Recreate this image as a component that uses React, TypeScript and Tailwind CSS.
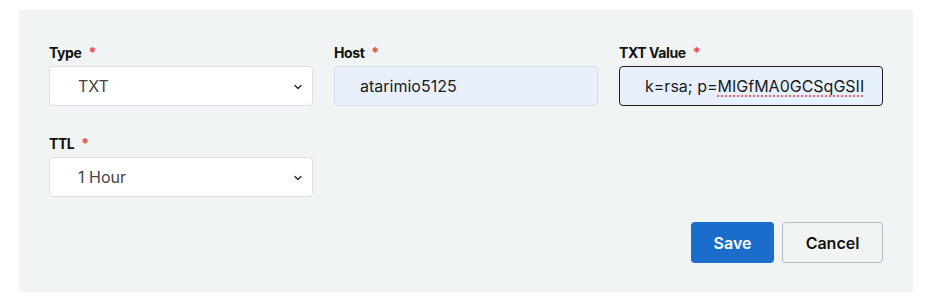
import { ChevronDown } from "lucide-react";

const font = { fontFamily: "Inter, 'Liberation Sans', sans-serif" };

function Label({ text }: { text: string }) {
  return (
    <div className="flex items-center h-5 mb-[4px] text-[14px] font-bold tracking-[-0.03em] text-[#111]">
      {text}
      <span className="ml-[7px] text-[#e5484d]">*</span>
    </div>
  );
}

function FakeSelect({ value }: { value: string }) {
  return (
    <div className="relative flex items-center h-[40px] rounded-[4px] border border-[#dcdfe3] bg-white pl-[28px] text-[16px] text-[#444]">
      {value}
      <ChevronDown className="absolute right-[8px] top-[14px] h-[12px] w-[12px] text-[#333]" strokeWidth={3} />
    </div>
  );
}

export default function App() {
  return (
    <div className="bg-white w-[932px] h-[300px] pt-[10px] pl-[19px]" style={font}>
      <div className="w-[894px] h-[282px] bg-[#f1f4f5] pt-[32px] px-[30px]">
        <div className="grid grid-cols-3 gap-x-[21px] gap-y-[27px]">
          <div>
            <Label text="Type" />
            <FakeSelect value="TXT" />
          </div>
          <div>
            <Label text="Host" />
            <div className="flex items-center h-[40px] rounded-[4px] border border-[#d8dee6] bg-[#e8f0fe] pl-[25px] text-[16px] text-[#1a1a1a]">
              atarimio5125
            </div>
          </div>
          <div>
            <Label text="TXT Value" />
            <div className="flex items-center h-[40px] rounded-[4px] border border-[#1f1f1f] bg-[#e8f0fe] pl-[25px] text-[16px] text-[#1a1a1a] overflow-hidden whitespace-nowrap">
              k=rsa; p=
              <span className="underline decoration-dotted decoration-[#e5484d] underline-offset-[4px]">MIGfMA0GCSqGSII</span>
            </div>
          </div>
          <div>
            <Label text="TTL" />
            <FakeSelect value="1 Hour" />
          </div>
        </div>
        <div className="flex justify-end gap-[8px] mt-[25px]">
          <button className="h-[41px] w-[83px] rounded-[4px] bg-[#1b6dcc] text-[16px] font-semibold text-white">
            Save
          </button>
          <button className="h-[41px] w-[101px] rounded-[4px] border border-[#b7bcc2] bg-[#f1f4f5] text-[16px] font-semibold text-[#111]">
            Cancel
          </button>
        </div>
      </div>
    </div>
  );
}
